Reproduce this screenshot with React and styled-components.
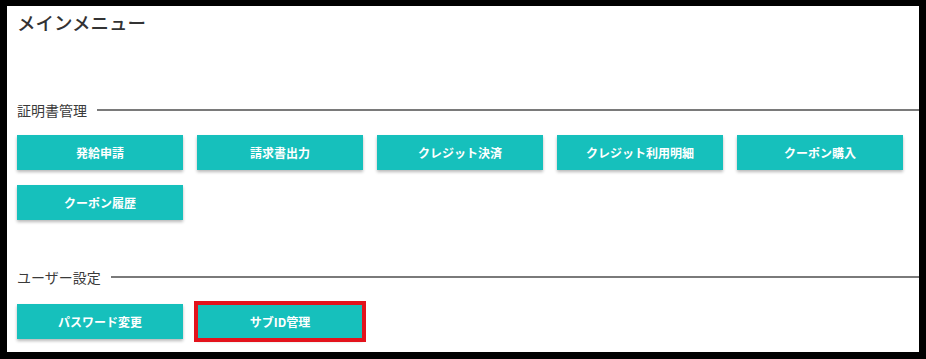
import React from "react";
import styled, { createGlobalStyle } from "styled-components";

const GlobalStyle = createGlobalStyle`
  html, body {
    margin: 0;
    padding: 0;
    background: #000;
  }
  body {
    font-family: "Noto Sans CJK JP", "Noto Sans", sans-serif;
  }
`;

const Frame = styled.div`
  width: 926px;
  height: 359px;
  box-sizing: border-box;
  padding: 6px 7px 7px 7px;
  background: #000;
`;

const Panel = styled.div`
  height: 100%;
  background: #fff;
  padding: 0 0 0 10px;
  box-sizing: border-box;
  overflow: hidden;
  display: flex;
  flex-direction: column;
`;

const PageTitle = styled.h1`
  margin: 3px 0 0;
  font-size: 18.5px;
  line-height: 26px;
  font-weight: 500;
  color: #333;
`;

const SectionHead = styled.div`
  display: flex;
  align-items: center;
  margin-top: ${(p) => p.top}px;
  font-size: 14px;
  line-height: 20px;
  color: #3a3a3a;
`;

const Rule = styled.span`
  flex: 1;
  height: 2px;
  margin-left: 10px;
  background: #7a7a7a;
`;

const ButtonGrid = styled.div`
  display: grid;
  grid-template-columns: repeat(5, 166px);
  column-gap: 14px;
  row-gap: 15px;
  margin-top: ${(p) => p.top}px;
`;

const MenuButton = styled.button`
  height: 35px;
  border: none;
  background: #16c0bc;
  color: #fff;
  font-family: inherit;
  font-size: 12px;
  font-weight: 700;
  box-shadow: 0 2px 3px rgba(0, 0, 0, 0.28);
  cursor: pointer;
  outline: ${(p) => (p.marked ? "4px solid #e3131c" : "none")};
  outline-offset: ${(p) => (p.marked ? "-1px" : "0")};
`;

const certItems = ["発給申請", "請求書出力", "クレジット決済", "クレジット利用明細", "クーポン購入", "クーポン履歴"];
const userItems = ["パスワード変更", "サブID管理"];

export default function App() {
  return (
    <>
      <GlobalStyle />
      <Frame>
        <Panel>
          <PageTitle>メインメニュー</PageTitle>
          <SectionHead top={65}>
            証明書管理
            <Rule />
          </SectionHead>
          <ButtonGrid top={15}>
            {certItems.map((label) => (
              <MenuButton key={label}>{label}</MenuButton>
            ))}
          </ButtonGrid>
          <SectionHead top={47}>
            ユーザー設定
            <Rule />
          </SectionHead>
          <ButtonGrid top={17}>
            {userItems.map((label) => (
              <MenuButton key={label} marked={label === "サブID管理"}>
                {label}
              </MenuButton>
            ))}
          </ButtonGrid>
        </Panel>
      </Frame>
    </>
  );
}
